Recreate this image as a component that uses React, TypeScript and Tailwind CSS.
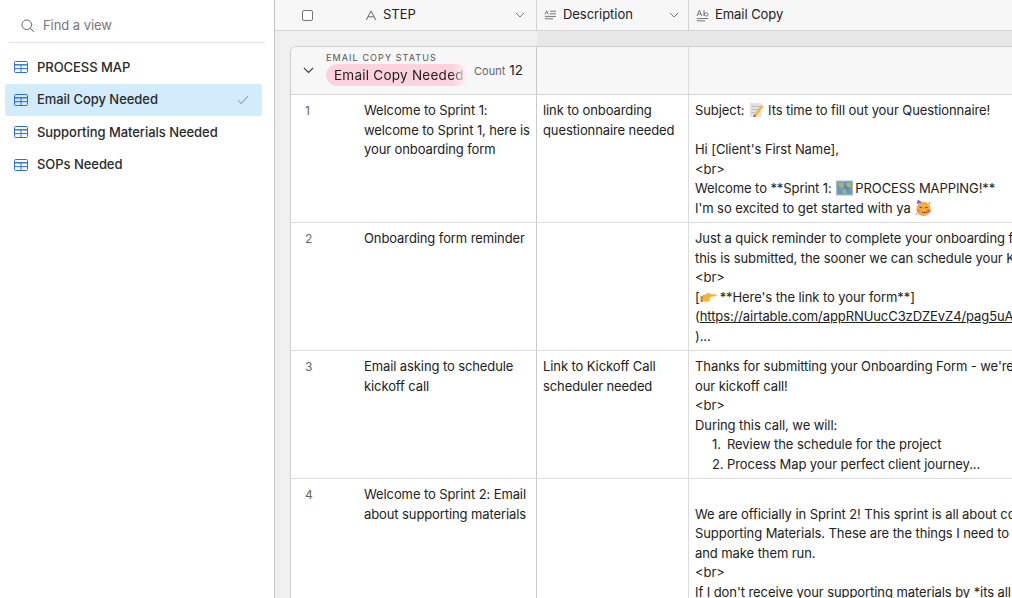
import React from "react";

function GridIcon() {
  return (
    <svg width="14" height="12" viewBox="0 0 14 12" fill="none" className="shrink-0">
      <rect x="0.5" y="0.5" width="13" height="11" rx="1" stroke="#2d6fd8" strokeWidth="1" />
      <path d="M0.5 3.8H13.5" stroke="#2d6fd8" strokeWidth="1.4" />
      <path d="M0.5 7.6H13.5M7 4V11.5" stroke="#2d6fd8" strokeWidth="1" />
    </svg>
  );
}

function Chevron({ w = 10, color = "#777" }: { w?: number; color?: string }) {
  return (
    <svg width={w} height={w * 0.6} viewBox="0 0 10 6" fill="none" className="shrink-0">
      <path d="M0.8 0.8L5 5L9.2 0.8" stroke={color} strokeWidth="1" />
    </svg>
  );
}

function ViewRow({ label, active }: { label: string; active?: boolean }) {
  return (
    <div className={`flex h-[32.5px] items-center rounded-[3px] pl-[9px] pr-[13px] ${active ? "bg-[#d2ecfc]" : ""}`}>
      <GridIcon />
      <span className="ml-[9px] flex-1 text-[13px] font-medium tracking-[-0.05px] text-[#2a2a2a]">{label}</span>
      {active && (
        <svg width="12" height="10" viewBox="0 0 12 10" fill="none">
          <path d="M1 5.2L4.2 8.6L11 1.2" stroke="#7a8a94" strokeWidth="1" />
        </svg>
      )}
    </div>
  );
}

function Memo() {
  return (
    <svg width="15" height="16" viewBox="0 0 15 16" className="ml-[1px] mr-[4px] inline-block align-[-3px]">
      <rect x="1" y="1" width="11.5" height="14" fill="#e2e2e2" />
      <path d="M2.5 4.5H11M2.5 7.5H9M2.5 10.5H6" stroke="#b5b5b5" strokeWidth="0.8" />
      <path d="M5 12.5L12.5 3L14.5 4.5L7 14.5L4.5 15Z" fill="#f0b93a" />
      <path d="M4.5 15L5 12.5L7 14.5Z" fill="#555" />
    </svg>
  );
}

function MapEmoji() {
  return (
    <svg width="17" height="16" viewBox="0 0 17 16" className="ml-[1px] mr-[2px] inline-block align-[-3px]">
      <rect x="0" y="0.5" width="17" height="15" fill="#aeb8bf" />
      <rect x="1.2" y="1.7" width="14.6" height="12.6" fill="#5e9dc4" />
      <path d="M2 3L7 2.5L8 6L5 8.5L3 6ZM10.5 3L15 2.8L15 7L11.5 7.5ZM6 10L9.5 9.5L10.5 13.5L7 13.5Z" fill="#a9b56c" />
      <path d="M8.5 6L12.5 9" stroke="#c94f4f" strokeWidth="1.1" />
    </svg>
  );
}

function Party() {
  return (
    <svg width="17" height="18" viewBox="0 0 17 18" className="ml-[1px] inline-block align-[-4px]">
      <circle cx="8.5" cy="10" r="7.2" fill="#f5ae3c" />
      <path d="M1.5 5L3 0.5L7 3.5Z" fill="#7c5cd6" />
      <circle cx="4" cy="11.8" r="1.8" fill="#ee7f66" />
      <circle cx="13" cy="11.8" r="1.8" fill="#ee7f66" />
      <path d="M4.5 8.2L7 9M10 9L12.5 8.2M7 13Q8.5 14.5 10.5 13" stroke="#6b3d12" strokeWidth="1" fill="none" />
      <path d="M10.5 13.8L15.5 11.5" stroke="#d9455f" strokeWidth="1.3" />
      <circle cx="14.5" cy="4" r="0.9" fill="#4fb3e8" />
      <circle cx="1.5" cy="15" r="0.8" fill="#e85f8a" />
    </svg>
  );
}

function Point() {
  return (
    <svg width="17" height="12" viewBox="0 0 17 12" className="mr-[3px] inline-block align-[-1px]">
      <path d="M1 6Q2.5 3.5 5 3.5L9 1.5L10 3L16.5 3.5V5L10 6L9.5 10.5H4Q1 10 1 7.5Z" fill="#f2b33d" />
      <path d="M0.5 5H3V11H0.5Z" fill="#d98b1e" />
    </svg>
  );
}

function Row({
  n,
  step,
  desc,
  children,
}: {
  n: number;
  step: React.ReactNode;
  desc?: React.ReactNode;
  children: React.ReactNode;
}) {
  return (
    <div className="flex h-[128px] shrink-0 border-b border-[#dcdcdc] bg-white text-[13px] leading-[19.5px] tracking-[-0.1px] text-[#222]">
      <div className="flex w-[246px] shrink-0 border-r border-[#c8c8c8]">
        <div className="w-[73px] shrink-0 pl-[14px] pt-[6px] text-[12px] text-[#666]">{n}</div>
        <div className="flex-1 pr-[2px] pt-[6px]">{step}</div>
      </div>
      <div className="w-[152px] shrink-0 border-r border-[#dcdcdc] pl-[6px] pr-[4px] pt-[6px]">{desc}</div>
      <div className="w-[640px] shrink-0 overflow-hidden whitespace-nowrap pl-[6px] pt-[6px] tracking-[-0.08px]">{children}</div>
    </div>
  );
}

export default function App() {
  return (
    <div
      className="flex h-[598px] w-[1012px] overflow-hidden bg-[#f0f0f0] text-[13px]"
      style={{ fontFamily: "Inter, 'Liberation Sans', sans-serif" }}
    >
      <aside className="flex w-[275px] shrink-0 flex-col border-r border-[#c4c4c4] bg-white">
        <div className="mx-[9px] flex h-[43px] items-center border-b border-[#e2e2e2] pl-[12px] pt-[9px]">
          <svg width="14" height="14" viewBox="0 0 14 14" fill="none">
            <circle cx="5.8" cy="5.8" r="4.8" stroke="#666" strokeWidth="1" />
            <path d="M9.3 9.3L13 13" stroke="#666" strokeWidth="1" />
          </svg>
          <span className="ml-[8px] text-[13px] tracking-[-0.05px] text-[#777]">Find a view</span>
        </div>
        <div className="mx-[5px] mt-[8px] flex w-[257px] flex-col">
          <ViewRow label="PROCESS MAP" />
          <ViewRow label="Email Copy Needed" active />
          <ViewRow label="Supporting Materials Needed" />
          <ViewRow label="SOPs Needed" />
        </div>
      </aside>

      <main className="flex min-w-0 flex-1 flex-col">
        <div className="flex h-[31px] shrink-0 border-b border-[#d4d4d4] bg-[#f7f7f7] text-[13px] tracking-[-0.05px] text-[#222]">
          <div className="flex w-[262px] shrink-0 items-center border-r border-[#d4d4d4] pr-[11px]">
            <div className="ml-[27px] h-[11px] w-[11px] rounded-[2px] border border-[#77777a] bg-white" />
            <svg width="12" height="11" viewBox="0 0 12 11" fill="none" className="ml-[52px]">
              <path d="M1.2 10L6 1L10.8 10M3 6.8H9" stroke="#666" strokeWidth="1" />
            </svg>
            <span className="ml-[6px] flex-1">STEP</span>
            <Chevron />
          </div>
          <div className="flex w-[152px] shrink-0 items-center border-r border-[#d4d4d4] pl-[7px] pr-[9px]">
            <svg width="13" height="10" viewBox="0 0 13 10" fill="none">
              <path d="M1 4.5L2.7 0.8L4.4 4.5M6 1.2H12M6 3.8H12M1 6.4H12M1 8.8H9" stroke="#666" strokeWidth="0.9" />
            </svg>
            <span className="ml-[6px] flex-1">Description</span>
            <Chevron />
          </div>
          <div className="flex flex-1 items-center pl-[7px]">
            <svg width="13" height="13" viewBox="0 0 13 13" fill="none">
              <path d="M1 7L3.4 1.2L5.8 7M2 5H5M8 1V7M8 5.5Q9 3.5 10.5 3.7T12 5.5T10.5 7T8 5.5M1 9.5H12M1 11.8H9" stroke="#666" strokeWidth="0.9" />
            </svg>
            <span className="ml-[6px]">Email Copy</span>
          </div>
        </div>

        <div className="flex h-[15px] shrink-0 bg-[#e8e8e8]">
          <div className="w-[262px] shrink-0 bg-[#f0f0f0]" />
        </div>

        <div className="ml-[15px] flex min-h-0 flex-1 flex-col overflow-hidden rounded-tl-[6px] border-l border-t border-[#cfcfcf] bg-white">
          <div className="flex h-[48px] shrink-0 border-b border-[#d4d4d4] bg-[#f7f7f7]">
            <div className="flex w-[246px] shrink-0 items-center border-r border-[#c8c8c8]">
              <div className="ml-[12px] w-[23px] shrink-0">
                <Chevron w={11} color="#333" />
              </div>
              <div className="mb-[3px] w-[148px] shrink-0">
                <div className="text-[9px] leading-[10px] tracking-[1.1px] text-[#555]">EMAIL COPY STATUS</div>
                <div className="mt-[1px] h-[22px] w-[142px] overflow-hidden whitespace-nowrap rounded-full bg-[#fcd2dc] pl-[8px] text-[13.5px] leading-[22px] tracking-[0.25px] text-[#222] [mask-image:linear-gradient(90deg,#000_88%,transparent_100%)]">
                  Email Copy Needed
                </div>
              </div>
              <span className="mt-[1px] text-[11px] text-[#666]">Count</span>
              <span className="ml-[4px] text-[13.5px] text-[#222]">12</span>
            </div>
            <div className="w-[152px] shrink-0 border-r border-[#dcdcdc]" />
          </div>

          <Row
            n={1}
            step={<>Welcome to Sprint 1: welcome to Sprint 1, here is your onboarding form</>}
            desc={<>link to onboarding questionnaire needed</>}
          >
            <div>Subject: <Memo />Its time to fill out your Questionnaire!</div>
            <div>&nbsp;</div>
            <div>Hi [Client's First Name],</div>
            <div>&lt;br&gt;</div>
            <div>Welcome to **Sprint 1: <MapEmoji />PROCESS MAPPING!**</div>
            <div>I'm so excited to get started with ya <Party /></div>
          </Row>
          <Row n={2} step={<>Onboarding form reminder</>}>
            <div>Just a quick reminder to complete your onboarding form! The sooner</div>
            <div>this is submitted, the sooner we can schedule your Kickoff Call.</div>
            <div>&lt;br&gt;</div>
            <div>[<Point />**Here's the link to your form**]</div>
            <div>(<span className="underline">https://airtable.com/appRNUucC3zDZEvZ4/pag5uAbcdefghijk</span></div>
            <div>)...</div>
          </Row>
          <Row
            n={3}
            step={<>Email asking to schedule kickoff call</>}
            desc={<>Link to Kickoff Call scheduler needed</>}
          >
            <div>Thanks for submitting your Onboarding Form - we're ready to schedule</div>
            <div>our kickoff call!</div>
            <div>&lt;br&gt;</div>
            <div>During this call, we will:</div>
            <div className="flex pl-[17px]"><span className="w-[15px]">1.</span><span>Review the schedule for the project</span></div>
            <div className="flex pl-[17px]"><span className="w-[15px]">2.</span><span>Process Map your perfect client journey...</span></div>
          </Row>
          <Row n={4} step={<>Welcome to Sprint 2: Email about supporting materials</>}>
            <div>&nbsp;</div>
            <div>We are officially in Sprint 2! This sprint is all about collecting your</div>
            <div>Supporting Materials. These are the things I need to build your systems</div>
            <div>and make them run.</div>
            <div>&lt;br&gt;</div>
            <div>If I don't receive your supporting materials by *its all due date*</div>
          </Row>
        </div>
      </main>
    </div>
  );
}
